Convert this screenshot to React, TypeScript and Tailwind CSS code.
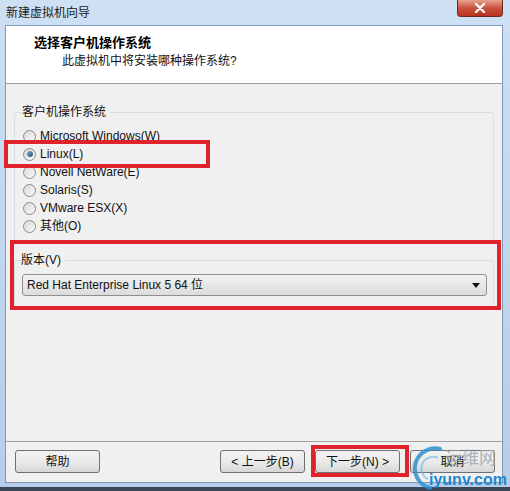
import React from 'react';

const cjk = { fontFamily: '"Liberation Sans", "Noto Sans CJK SC", sans-serif' };

const osList = [
  { label: 'Microsoft Windows(W)', checked: false },
  { label: 'Linux(L)', checked: true },
  { label: 'Novell NetWare(E)', checked: false },
  { label: 'Solaris(S)', checked: false },
  { label: 'VMware ESX(X)', checked: false },
  { label: '其他(O)', checked: false },
];

function Radio({ checked }: { checked: boolean }) {
  return (
    <span className="flex h-[13px] w-[13px] items-center justify-center rounded-full border border-[#8a8a8a] bg-gradient-to-br from-[#d8d8d8] to-[#fafafa]">
      {checked && (
        <span className="h-[6px] w-[6px] rounded-full bg-gradient-to-br from-[#7fb2d6] to-[#1b4f79]" />
      )}
    </span>
  );
}

function Button({ children }: { children: React.ReactNode }) {
  return (
    <button className="flex h-[23px] w-[85px] items-center justify-center rounded-[3px] border border-[#707070] bg-gradient-to-b from-[#f2f2f2] via-[#ebebeb] to-[#d6d6d6] text-[12px] text-[#111]">
      {children}
    </button>
  );
}

export default function App() {
  return (
    <div
      className="relative flex h-[491px] w-[510px] flex-col overflow-hidden bg-gradient-to-b from-[#cde0f4] to-[#b5cde8]"
      style={cjk}
    >
      {/* title bar */}
      <div className="flex h-[25px] items-start justify-between pl-[6px] pr-[7px]">
        <span className="mt-[5px] text-[12px] leading-[16px] text-[#1a1a1a]">新建虚拟机向导</span>
        <div className="flex h-[17px] w-[46px] items-center justify-center rounded-b-[4px] border border-t-0 border-[#6e2a22] bg-gradient-to-b from-[#e8a392] via-[#c8513c] to-[#b8321d]">
          <svg width="12" height="10" viewBox="0 0 12 10">
            <path d="M2 1 L10 9 M10 1 L2 9" stroke="#fff" strokeWidth="2.4" strokeLinecap="round" />
          </svg>
        </div>
      </div>

      {/* panel */}
      <div className="ml-[5px] mr-[7px] flex flex-1 flex-col border border-[#8398b2] bg-[#f0f0f0]">
        <div className="h-[58px] border-b border-[#a0a0a0] bg-white pl-[28px] pt-[8px]">
          <div className="text-[13px] font-bold leading-[17px] text-black">选择客户机操作系统</div>
          <div className="ml-[28px] mt-[2px] text-[12px] leading-[16px] text-[#111]">此虚拟机中将安装哪种操作系统?</div>
        </div>

        <div className="flex flex-1 flex-col px-[8px] pt-[20px]">
          <fieldset className="rounded-[3px] border border-[#d5dfe5] pb-[8px] pl-[8px]">
            <legend className="ml-[-1px] pr-[4px] text-[12px] leading-[16px] text-[#111]">客户机操作系统</legend>
            <div className="mt-[7px] flex flex-col">
              {osList.map((os) => (
                <div key={os.label} className="flex h-[18px] items-center gap-[4px] text-[12px] text-[#111]">
                  <Radio checked={os.checked} />
                  <span>{os.label}</span>
                </div>
              ))}
            </div>
          </fieldset>

          <fieldset className="mt-[8px] rounded-[3px] border border-[#d5dfe5] pb-[10px] pl-[7px] pr-[6px]">
            <legend className="ml-[-1px] pr-[4px] text-[12px] leading-[16px] text-[#111]">版本(V)</legend>
            <div className="mt-[6px] flex h-[22px] items-center justify-between rounded-[3px] border border-[#8e8f8f] bg-gradient-to-b from-[#f3f3f3] to-[#dcdcdc] pl-[4px] pr-[6px] text-[12px] text-[#111]">
              <span>Red Hat Enterprise Linux 5 64 位</span>
              <svg width="8" height="5" viewBox="0 0 8 5">
                <path d="M0 0 H8 L4 5 Z" fill="#111" />
              </svg>
            </div>
          </fieldset>
        </div>

        <div className="flex h-[41px] items-start justify-between border-t border-[#a0a0a0] pl-[9px] pr-[7px] pt-[8px]">
          <Button>帮助</Button>
          <div className="flex gap-[10px]">
            <Button>&lt; 上一步(B)</Button>
            <Button>下一步(N) &gt;</Button>
            <Button>取消</Button>
          </div>
        </div>
      </div>

      <div className="h-[4px]" />
      <div className="h-[4px] bg-[#3a4654]" />

      {/* annotations */}
      <div className="absolute left-[4px] top-[140px] h-[28px] w-[206px] border-4 border-[#e0222c]" />
      <div className="absolute left-[10px] top-[240px] h-[70px] w-[491px] border-4 border-[#e0222c]" />
      <div className="absolute left-[311px] top-[445px] h-[32px] w-[98px] border-4 border-[#e0222c]" />

      {/* watermark */}
      <div className="pointer-events-none absolute left-[410px] top-[446px] h-[45px] w-[100px]">
        <svg className="absolute left-0 top-0" width="40" height="45" viewBox="0 0 40 45">
          <path d="M30 3 A19 19 0 1 0 20 42" fill="none" stroke="#2f8fd0" strokeWidth="4" strokeLinecap="round" opacity="0.85" />
          <path d="M28 12 A11 11 0 1 0 18 33" fill="none" stroke="#6cb6e6" strokeWidth="2" opacity="0.6" />
        </svg>
        <span className="absolute left-[35px] top-[3px] text-[17px] leading-[20px] text-[#9aa4ae] opacity-80">运维网</span>
        <span className="absolute left-[19px] top-[24px] text-[16px] font-bold leading-[19px] text-[#1e88d0]">iyunv.com</span>
      </div>
    </div>
  );
}
